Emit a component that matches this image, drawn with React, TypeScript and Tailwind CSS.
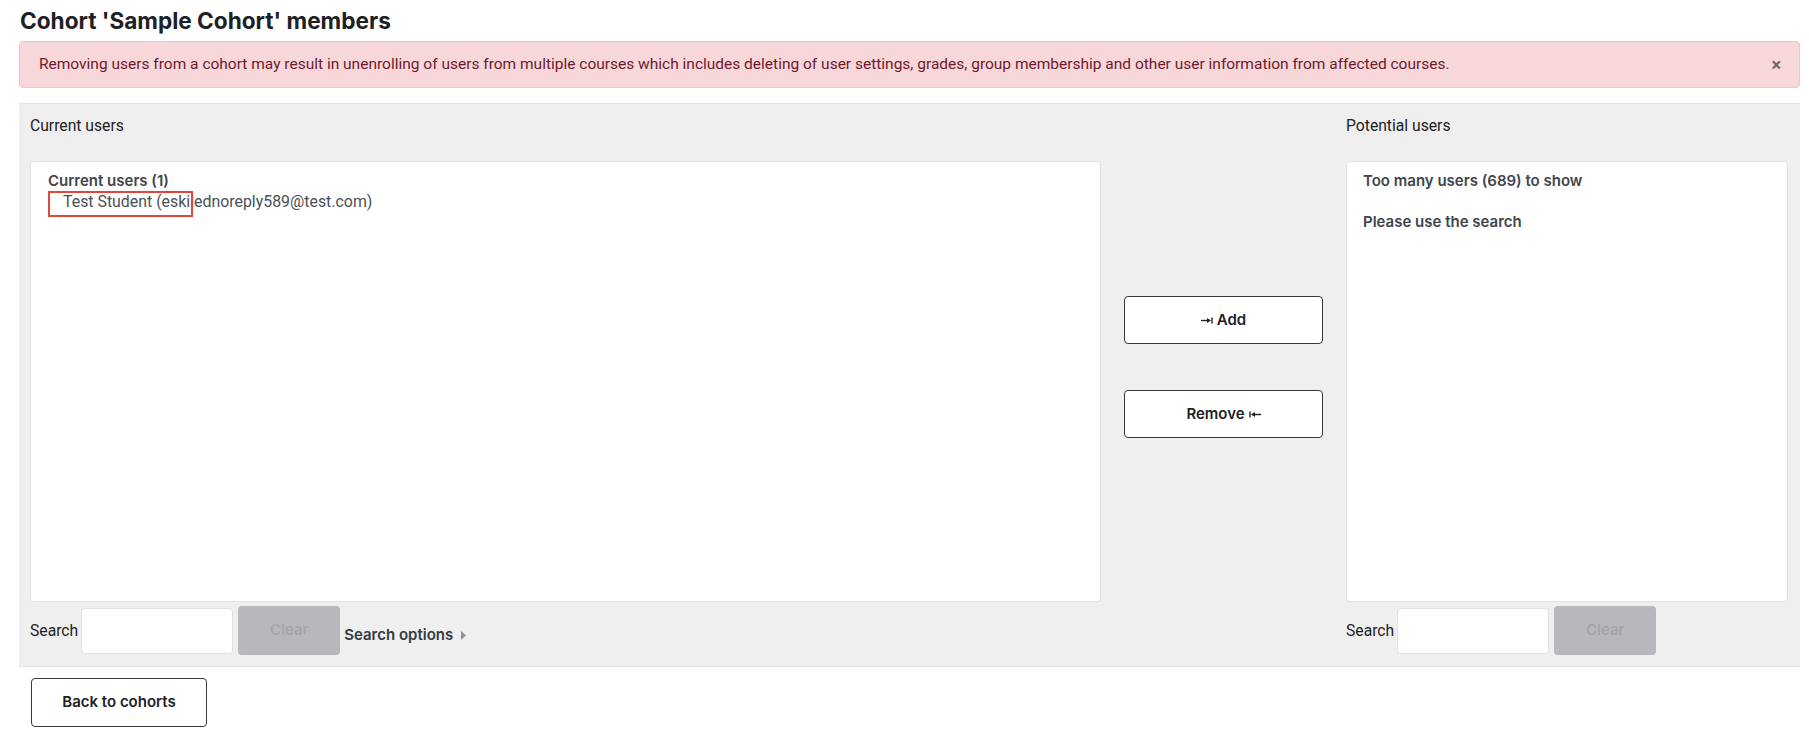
import React from 'react';

function ArrowToBar({ flip = false }: { flip?: boolean }) {
  return (
    <svg
      className={`h-[7px] w-[12px] ${flip ? '-scale-x-100' : ''}`}
      viewBox="0 0 12 7"
      fill="none"
    >
      <path d="M0 3.5h7" stroke="#1d2125" strokeWidth={1.4} />
      <path d="M6 1l4 2.5L6 6z" fill="#1d2125" />
      <path d="M11 0.5v6" stroke="#1d2125" strokeWidth={1.4} />
    </svg>
  );
}

function SearchRow({ withOptions = false }: { withOptions?: boolean }) {
  return (
    <div className="mt-[4px] flex items-center">
      <span className="mr-[3px] text-[15.7px] text-[#1d2125]">Search</span>
      <input
        type="text"
        className="h-[46px] w-[152px] rounded-[4px] border border-[#dee2e6] bg-white px-2 text-[15px] outline-none"
      />
      <button
        disabled
        className="ml-[5px] h-[49px] w-[102px] rounded-[4px] bg-[#b7b8bb] font-['Inter',sans-serif] text-[15px] font-semibold text-[#a5a6a9]"
      >
        Clear
      </button>
      {withOptions && (
        <div className="ml-[4px] mt-[9px] flex items-center gap-[8px] font-['Inter',sans-serif] text-[15px] font-semibold text-[#343a40]">
          Search options
          <svg className="h-[9px] w-[5px]" viewBox="0 0 5 9">
            <path d="M0 0l5 4.5L0 9z" fill="#8e9296" />
          </svg>
        </div>
      )}
    </div>
  );
}

export default function App() {
  return (
    <div className="min-h-[730px] w-full bg-white pl-[19px] pr-[9px] font-['Roboto',sans-serif] text-[#1d2125]">
      {/* Heading */}
      <h2 className="pl-[1px] pt-[7px] font-['Inter',sans-serif] text-[22.6px] font-bold leading-[28px] text-[#1d2125]">
        Cohort 'Sample Cohort' members
      </h2>

      {/* Warning */}
      <div className="mt-[6px] flex items-center justify-between rounded-[4px] border border-[#f5c2c7] bg-[#f8d7da] py-[11px] pl-[19px] pr-[18px] text-[15.5px] leading-[23px] text-[#6e1a2c]">
        <span>
          Removing users from a cohort may result in unenrolling of users from multiple courses which includes deleting
          of user settings, grades, group membership and other user information from affected courses.
        </span>
        <span className="text-[18px] font-bold leading-none text-[#6b6b6b]">×</span>
      </div>

      {/* Selector panel */}
      <div className="mt-[15px] flex border-y border-[#dee2e6] bg-[#efefef] pb-[11px] pl-[11px] pr-[12px] pt-[10px]">
        {/* Current users */}
        <div className="flex flex-1 flex-col">
          <label className="text-[15.7px] leading-[23px] text-[#1d2125]">Current users</label>
          <div className="relative mt-[24px] h-[441px] rounded-[4px] border border-[#dee2e6] bg-white pl-[17px] pt-[8px]">
            <div className="font-['Inter',sans-serif] text-[15px] font-semibold leading-[22px] text-[#3f454b]">
              Current users (1)
            </div>
            <div className="pl-[15px] text-[15.9px] leading-[20px] text-[#495057]">
              Test Student (eskilednoreply589@test.com)
            </div>
            <div className="absolute left-[17px] top-[29px] h-[26px] w-[145px] border-2 border-[#e2463d]" />
          </div>
          <SearchRow withOptions />
        </div>

        {/* Add / remove */}
        <div className="flex w-[245px] flex-col items-center pt-[182px]">
          <button className="flex h-[48px] w-[199px] items-center justify-center gap-[4px] rounded-[4px] border border-[#343a40] bg-white font-['Inter',sans-serif] text-[15px] font-semibold text-[#1d2125]">
            <ArrowToBar />
            Add
          </button>
          <button className="mt-[46px] flex h-[48px] w-[199px] items-center justify-center gap-[4px] rounded-[4px] border border-[#343a40] bg-white font-['Inter',sans-serif] text-[15px] font-semibold text-[#1d2125]">
            Remove
            <ArrowToBar flip />
          </button>
        </div>

        {/* Potential users */}
        <div className="flex w-[442px] flex-col">
          <label className="text-[15.7px] leading-[23px] text-[#1d2125]">Potential users</label>
          <div className="mt-[24px] h-[441px] rounded-[4px] border border-[#dee2e6] bg-white pl-[16px] pt-[8px] font-['Inter',sans-serif] text-[15px] font-semibold leading-[22px] text-[#3f454b]">
            <div>Too many users (689) to show</div>
            <div className="mt-[19px]">Please use the search</div>
          </div>
          <SearchRow />
        </div>
      </div>

      {/* Footer */}
      <div className="pl-[12px] pt-[11px]">
        <button className="h-[49px] w-[176px] rounded-[4px] border border-[#343a40] bg-white font-['Inter',sans-serif] text-[15px] font-semibold text-[#1d2125]">
          Back to cohorts
        </button>
      </div>
    </div>
  );
}
